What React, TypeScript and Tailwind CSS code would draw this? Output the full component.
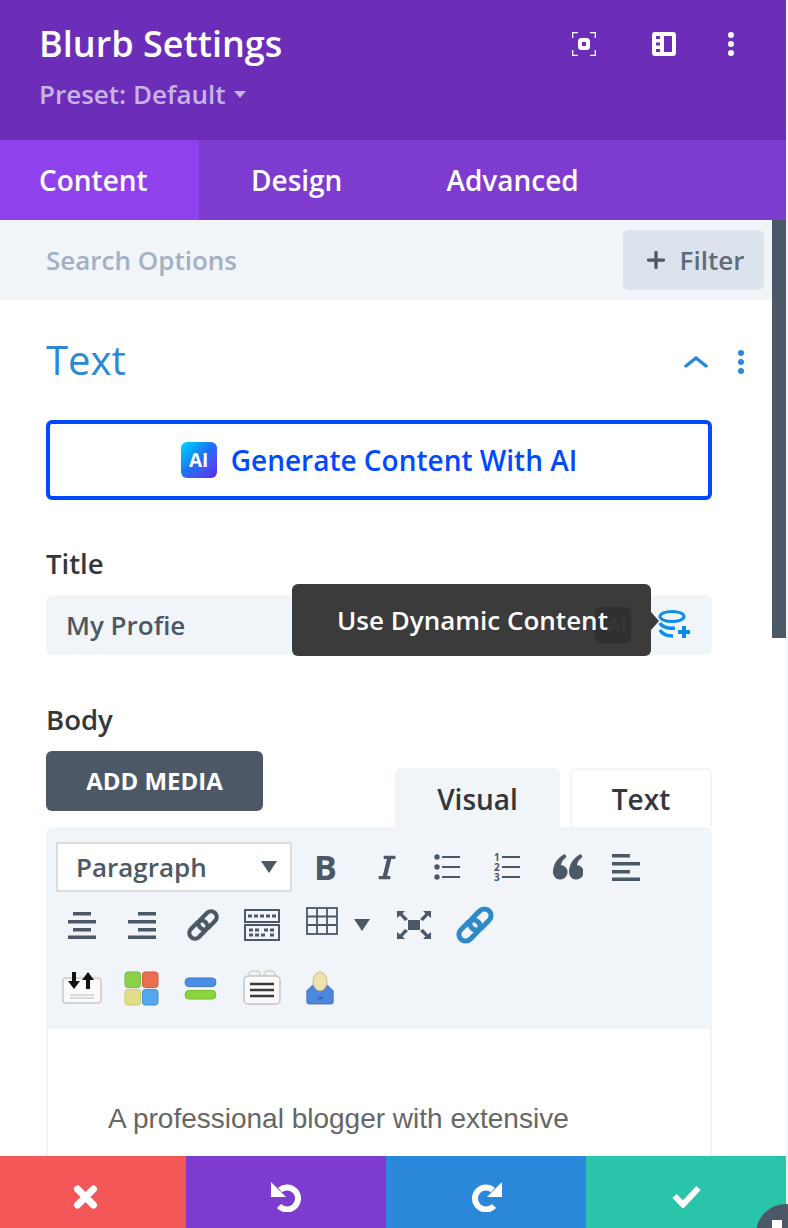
import React from "react";
import { Plus } from "lucide-react";
import { FaItalic } from "react-icons/fa";

const Dots = ({ className }: { className: string }) => (
  <svg viewBox="0 0 6 24" className={className} fill="currentColor">
    <circle cx="3" cy="3" r="3" />
    <circle cx="3" cy="12" r="3" />
    <circle cx="3" cy="21" r="3" />
  </svg>
);

const FocusIcon = () => (
  <svg viewBox="0 0 24 24" className="w-6 h-6 text-white" fill="none" stroke="currentColor" strokeWidth="1.3">
    <path d="M.7 6V.7H6M18 .7h5.300V6M23.300 18v5.300H18M6 23.300H.7V18" />
    <rect x="8" y="8" width="8" height="8" rx="1.500" strokeWidth="4" />
  </svg>
);

const LayoutIcon = () => (
  <svg viewBox="0 0 24 24" className="w-6 h-6 text-white">
    <path
      fill="currentColor"
      fillRule="evenodd"
      d="M3 0h18a3 3 0 0 1 3 3v18a3 3 0 0 1-3 3H3a3 3 0 0 1-3-3V3a3 3 0 0 1 3-3zm1 4v3h4V4H4zm0 6.500v3h4v-3H4zM4 17v3h4v-3H4zM12 4v16h8V4h-8z"
    />
  </svg>
);

const ChainIcon = ({ className }: { className: string }) => (
  <svg viewBox="0 0 36 36" className={className} fill="none" stroke="currentColor" strokeWidth="4.500">
    <g transform="rotate(-45 18 18)">
      <rect x="0" y="12" width="22" height="12" rx="6" />
      <rect x="14" y="12" width="22" height="12" rx="6" />
    </g>
  </svg>
);

const AiBadge = () => (
  <span className="w-9 h-9 flex items-center justify-center rounded-[6px] bg-gradient-to-br from-[#0fd8fb] via-[#1f6ef5] to-[#5a1bf0] text-white text-[19px] font-bold">
    AI
  </span>
);

const LinesIcon = ({ rows }: { rows: number[][] }) => (
  <svg viewBox="0 0 28 28" className="w-7 h-7 text-[#4c5866]" fill="currentColor">
    {rows.map(([x, y, w], i) => (
      <rect key={i} x={x} y={y} width={w} height="3.500" />
    ))}
  </svg>
);

const BulletList = () => (
  <svg viewBox="0 0 26 28" className="w-[26px] h-7 text-[#4c5866]" fill="currentColor">
    <circle cx="3" cy="4" r="2.700" />
    <circle cx="3" cy="14" r="2.700" />
    <circle cx="3" cy="24" r="2.700" />
    <rect x="8" y="3" width="18" height="2" />
    <rect x="8" y="13" width="18" height="2" />
    <rect x="8" y="23" width="18" height="2" />
  </svg>
);

const NumberList = () => (
  <svg viewBox="0 -3 26 34" className="w-[26px] h-[34px] -my-[3px] text-[#4c5866]" fill="currentColor">
    <text x="0" y="8" fontSize="10" fontWeight="700" fontFamily="Open Sans, sans-serif">1</text>
    <text x="0" y="18" fontSize="10" fontWeight="700" fontFamily="Open Sans, sans-serif">2</text>
    <text x="0" y="27.500" fontSize="10" fontWeight="700" fontFamily="Open Sans, sans-serif">3</text>
    <rect x="8" y="3" width="18" height="2" />
    <rect x="8" y="13" width="18" height="2" />
    <rect x="8" y="23" width="18" height="2" />
  </svg>
);

const QuoteIcon = () => (
  <svg viewBox="0 0 30 26" className="w-[30px] h-[26px] text-[#4c5866]" fill="currentColor">
    <path d="M0 18C0 10 5 3 12 0l1.500 3C10 5.500 8.500 8 8 11a7.300 7.300 0 1 1-8 7z" />
    <path d="M16 18c0-8 5-15 12-18l1.500 3C26 5.500 24.500 8 24 11a7.300 7.300 0 1 1-8 7z" />
  </svg>
);

const KeyboardIcon = () => (
  <svg viewBox="0 0 36 32" className="w-9 h-8 text-[#4c5866]" fill="none" stroke="currentColor" strokeWidth="2">
    <rect x="1" y="1" width="34" height="12" />
    <rect x="1" y="16" width="34" height="15" />
    <path d="M4 7h28M5 21h12M20 21h11M5 26h18M26 26h5" strokeWidth="3" strokeDasharray="4 2" />
  </svg>
);

const TableIcon = () => (
  <svg viewBox="0 0 32 28" className="w-8 h-7 text-[#4c5866]" fill="none" stroke="currentColor" strokeWidth="1.800">
    <rect x="1" y="1" width="30" height="26" />
    <path d="M1 9.500h30M1 18h30M11 1v26M21 1v26" />
  </svg>
);

const FullscreenIcon = () => (
  <svg viewBox="0 0 34 28" className="w-[34px] h-7 text-[#4c5866]" fill="currentColor">
    <rect x="11" y="9" width="12" height="10" />
    <path d="M0 0h8L5.500 2.500 11 8 8 10 3 4.500 0 7zM34 0h-8l2.500 2.500L23 8l3 2 5-5.500L34 7zM0 28h8l-2.500-2.500L11 20l-3-2-5 5.500L0 21zM34 28h-8l2.500-2.500L23 20l3-2 5 5.500 3-2.500z" />
  </svg>
);

const DatabasePlus = () => (
  <svg viewBox="0 0 32 28" className="w-8 h-7 text-[#0c8fe8]" fill="none" stroke="currentColor" strokeWidth="3">
    <ellipse cx="14" cy="6.500" rx="12" ry="5" />
    <path d="M2 13c2 4 8 6 15 5M2 20c2 4 7 6 13 6" strokeWidth="3.500" />
    <path d="M26 16v12M20 22h12" strokeWidth="4" />
  </svg>
);

const ImportIcon = () => (
  <svg viewBox="0 0 40 34" className="w-10 h-[34px]">
    <rect x="1" y="7" width="38" height="25" rx="3" fill="#fafafa" stroke="#c9c9c9" strokeWidth="1.500" />
    <path d="M8 24h24M8 27h24" stroke="#bbbbbb" strokeWidth="1" />
    <path d="M10 1h4v9h4l-6 8-6-8h4zM28 18h-4V9h-4l6-8 6 8h-4z" fill="#111111" />
  </svg>
);

const ColorsIcon = () => (
  <svg viewBox="0 0 36 36" className="w-[35px] h-[35px]">
    <rect x="1" y="1" width="16" height="16" rx="3" fill="#8bd24a" stroke="#74b83a" />
    <rect x="19" y="1" width="16" height="16" rx="3" fill="#ea6f50" stroke="#d05a40" />
    <rect x="1" y="19" width="16" height="16" rx="3" fill="#e2de86" stroke="#ccc86e" />
    <rect x="19" y="19" width="16" height="16" rx="3" fill="#54a8ec" stroke="#3f90d4" />
  </svg>
);

const StackIcon = () => (
  <svg viewBox="0 0 34 26" className="w-[33px] h-[25px]">
    <rect x="1" y="2" width="32" height="9" rx="4" fill="#4c8ee6" stroke="#3d78c8" />
    <rect x="1" y="15" width="32" height="9" rx="4" fill="#8ad43e" stroke="#72b830" />
  </svg>
);

const ClipboardIcon = () => (
  <svg viewBox="0 0 38 36" className="w-[38px] h-9">
    <rect x="6" y="1" width="11" height="9" rx="3" fill="#f2f2f2" stroke="#c4c4c4" />
    <rect x="21" y="1" width="11" height="9" rx="3" fill="#f2f2f2" stroke="#c4c4c4" />
    <rect x="1" y="6" width="36" height="28" rx="4" fill="#fafafa" stroke="#c4c4c4" strokeWidth="1.500" />
    <path d="M7 14h24M7 20h24M7 26h24" stroke="#3a3a3a" strokeWidth="2.500" />
  </svg>
);

const UserIcon = () => (
  <svg viewBox="0 0 32 36" className="w-[30px] h-9">
    <path d="M8 15h16l6 6v12a2 2 0 0 1-2 2H4a2 2 0 0 1-2-2V21z" fill="#4c86dd" stroke="#3d70bd" />
    <ellipse cx="16" cy="11" rx="7.500" ry="10" fill="#efe3b0" stroke="#c9b980" />
    <rect x="14" y="28" width="5" height="2" fill="#2f5fa5" />
  </svg>
);

const CloseIcon = () => (
  <svg viewBox="0 0 25 24" className="w-[25px] h-6" fill="none" stroke="currentColor" strokeWidth="7" strokeLinecap="round">
    <path d="M4.500 4l16 16M20.500 4l-16 16" />
  </svg>
);

const UndoIcon = ({ className }: { className?: string }) => (
  <svg viewBox="0 0 31 30" className={`w-[31px] h-[30px] ${className ?? ""}`}>
    <path d="M9 8a11 11 0 1 1-1 16" fill="none" stroke="currentColor" strokeWidth="6" />
    <path d="M0 0v15h15z" fill="currentColor" />
  </svg>
);

const CheckIcon = () => (
  <svg viewBox="0 0 29 22" className="w-[29px] h-[22px]" fill="none" stroke="currentColor" strokeWidth="6">
    <path d="M2.500 10l8.500 8.500L26.500 2" />
  </svg>
);

export default function App() {
  return (
    <div className="relative w-[788px] h-[1228px] overflow-hidden bg-[#f1f4fa] font-['Open_Sans',sans-serif]">
      <div className="w-[786px] h-full bg-white flex flex-col">
        {/* header */}
        <div className="h-[140px] shrink-0 bg-[#6c2eb9] pl-[39px] pr-[52px] pt-[22px] flex justify-between">
          <div>
            <div className="text-white text-[36px] leading-[44px] font-semibold">Blurb Settings</div>
            <div className="mt-[10px] flex items-center gap-2 text-[#c9b3e6] text-[26px] leading-[36px] font-semibold">
              Preset: Default
              <span className="w-0 h-0 border-x-[6px] border-x-transparent border-t-[7px] border-t-[#c9b3e6]" />
            </div>
          </div>
          <div className="flex items-start pt-[10px]">
            <FocusIcon />
            <div className="ml-[56px]">
              <LayoutIcon />
            </div>
            <Dots className="ml-[52px] w-[6px] h-6 text-white" />
          </div>
        </div>

        {/* tabs */}
        <div className="h-20 shrink-0 bg-[#7d3bcf] flex text-[28px] font-semibold text-white">
          <div className="w-[199px] bg-[#8f42ec] pl-[39px] flex items-center">Content</div>
          <div className="pl-[52px] flex items-center">Design</div>
          <div className="pl-[104px] flex items-center">Advanced</div>
        </div>

        <div className="flex-1 min-h-0 flex items-start">
          <div className="flex-1 min-w-0 h-full overflow-hidden flex flex-col">
            {/* search */}
            <div className="h-20 shrink-0 bg-[#f1f5f9] pl-[46px] pr-2 flex items-center justify-between">
              <span className="text-[#a3b0c2] text-[26px] font-semibold">Search Options</span>
              <button className="w-[141px] h-[60px] rounded-md bg-[#dde3ec] flex items-center justify-center gap-[11px] text-[#5f6c7b] text-[26px] font-semibold">
                <Plus className="w-[26px] h-[26px] text-[#4c5866]" strokeWidth={3} />
                Filter
              </button>
            </div>

            <div className="pl-[46px] pr-[60px]">
              <div className="h-[120px] flex items-center justify-between -mr-[32px]">
                <span className="text-[#2b87da] text-[40px]">Text</span>
                <div className="flex items-center gap-[30px] mt-[4px]">
                  <svg viewBox="0 0 24 12" className="w-6 h-3 text-[#2b87da]" fill="none" stroke="currentColor" strokeWidth="3.500" strokeLinecap="round">
                    <path d="M2 10l10-8 10 8" />
                  </svg>
                  <Dots className="w-[6px] h-6 text-[#2b87da]" />
                </div>
              </div>

              <button className="w-full h-20 border-4 border-[#0049ff] rounded-md flex items-center justify-center gap-[14px] text-[#0049ff] text-[28px] font-semibold">
                <AiBadge />
                Generate Content With AI
              </button>

              <div className="mt-[44px] text-[#32373c] text-[27.500px] leading-[40px] font-semibold">Title</div>
              <div className="relative mt-[11px] h-[60px] rounded-md bg-[#f1f5f9] pl-[20px] flex items-center text-[#4c5866] text-[26px] font-semibold">
                My Profie
                <div className="absolute right-[22px] top-[15px]">
                  <DatabasePlus />
                </div>
                <div className="absolute left-[246px] -top-[11px] w-[359px] h-[72px] rounded-md bg-[#3a3b3a] flex items-center pl-[45px] pt-[1px] text-white text-[26px] font-semibold whitespace-nowrap">
                  <span className="absolute right-[20px] top-[23px] w-9 h-9 rounded-md bg-[#2f302f] flex items-center justify-center pl-[8px] text-[#373837] text-[20px] font-bold">
                    AI
                  </span>
                  <span className="relative">Use Dynamic Content</span>
                  <span className="absolute -right-[8px] top-[28px] w-0 h-0 border-y-[9px] border-y-transparent border-l-[8px] border-l-[#3a3b3a]" />
                </div>
              </div>

              <div className="mt-[45px] text-[#32373c] text-[27.500px] leading-[40px] font-semibold">Body</div>

              {/* media + editor tabs */}
              <div className="mt-[11px] flex items-start justify-between h-[76px]">
                <button className="w-[217px] h-[60px] rounded-md bg-[#4c5866] text-white text-[24px] font-bold">ADD MEDIA</button>
                <div className="flex gap-[10px] pt-[17px]">
                  <div className="w-[165px] h-[59px] rounded-t-md bg-[#f1f5f9] flex items-center justify-center pt-[2px] text-[#32373c] text-[28px] font-semibold">Visual</div>
                  <div className="w-[142px] h-[59px] rounded-t-md bg-white border-2 border-b-0 border-[#f1f5f9] flex items-center justify-center text-[#32373c] text-[28px] font-semibold">Text</div>
                </div>
              </div>

              {/* toolbar */}
              <div className="bg-[#f1f5f9] rounded-t-md h-[202px] pl-[10px] pt-[14px]">
                <div className="h-[52px] flex items-center">
                  <div className="w-[236px] h-[50px] border-2 border-[#dcdcdc] bg-white pl-[18px] pr-[13px] flex items-center justify-between text-[#4c5866] text-[26px] font-semibold">
                    Paragraph
                    <span className="w-0 h-0 border-x-[8px] border-x-transparent border-t-[12px] border-t-[#4c5866]" />
                  </div>
                  <div className="ml-[24px] grid grid-cols-[repeat(6,59.200px)] items-center text-[#4c5866]">
                    <span className="-ml-[2px] text-[34px] leading-[28px] font-bold">B</span>
                    <FaItalic className="w-[24px] h-[27px]" />
                    <BulletList />
                    <NumberList />
                    <QuoteIcon />
                    <LinesIcon rows={[[0, 1, 18], [0, 9, 28], [0, 17, 18], [0, 24.500, 28]]} />
                  </div>
                </div>
                <div className="mt-[2px] h-[60px] flex items-center pl-[12px] text-[#4c5866]">
                  <LinesIcon rows={[[5, 1, 18], [0, 9, 28], [5, 17, 18], [0, 24.500, 28]]} />
                  <div className="ml-[32px]">
                    <LinesIcon rows={[[10, 1, 18], [0, 9, 28], [10, 17, 18], [0, 24.500, 28]]} />
                  </div>
                  <ChainIcon className="ml-[30px] w-[34px] h-[36px]" />
                  <div className="ml-[24px]">
                    <KeyboardIcon />
                  </div>
                  <div className="ml-[26px] -mt-[8px]">
                    <TableIcon />
                  </div>
                  <span className="ml-[16px] w-0 h-0 border-x-[8px] border-x-transparent border-t-[12px] border-t-[#4c5866]" />
                  <div className="ml-[27px]">
                    <FullscreenIcon />
                  </div>
                  <ChainIcon className="ml-[24px] w-10 h-10 text-[#2f8ac9]" />
                </div>
                <div className="mt-[1px] h-[64px] flex items-center pl-[6px]">
                  <ImportIcon />
                  <div className="ml-[22px]">
                    <ColorsIcon />
                  </div>
                  <div className="ml-[25px]">
                    <StackIcon />
                  </div>
                  <div className="ml-[26px]">
                    <ClipboardIcon />
                  </div>
                  <div className="ml-[24px]">
                    <UserIcon />
                  </div>
                </div>
              </div>

              {/* editor body */}
              <div className="h-[200px] border-x-2 border-[#f1f5f9] pl-[60px] pt-[71px] text-[#666666] text-[28px] leading-[38px] font-['Liberation_Sans',sans-serif]">
                A professional blogger with extensive
              </div>
            </div>
          </div>
          <div className="w-[14px] h-[418px] shrink-0 bg-[#4c5866]" />
        </div>

        {/* action bar */}
        <div className="h-[72px] shrink-0 flex text-white">
          <div className="w-[186px] bg-[#f45757] flex items-center justify-center pt-[10px] pr-[15px]">
            <CloseIcon />
          </div>
          <div className="w-[200px] bg-[#7e3bd0] flex items-center justify-center pt-[10px]">
            <UndoIcon />
          </div>
          <div className="w-[200px] bg-[#2b87da] flex items-center justify-center pt-[10px]">
            <UndoIcon className="-scale-x-100" />
          </div>
          <div className="w-[200px] bg-[#29c4a9] flex items-center justify-center pt-[10px]">
            <CheckIcon />
          </div>
        </div>
      </div>

      {/* resize handle */}
      <div className="absolute -right-[28px] -bottom-[36px] w-[60px] h-[60px] rounded-full bg-[#4c5866]">
        <span className="absolute left-[16px] top-[16px] w-[10px] h-2 bg-white" />
      </div>
    </div>
  );
}
